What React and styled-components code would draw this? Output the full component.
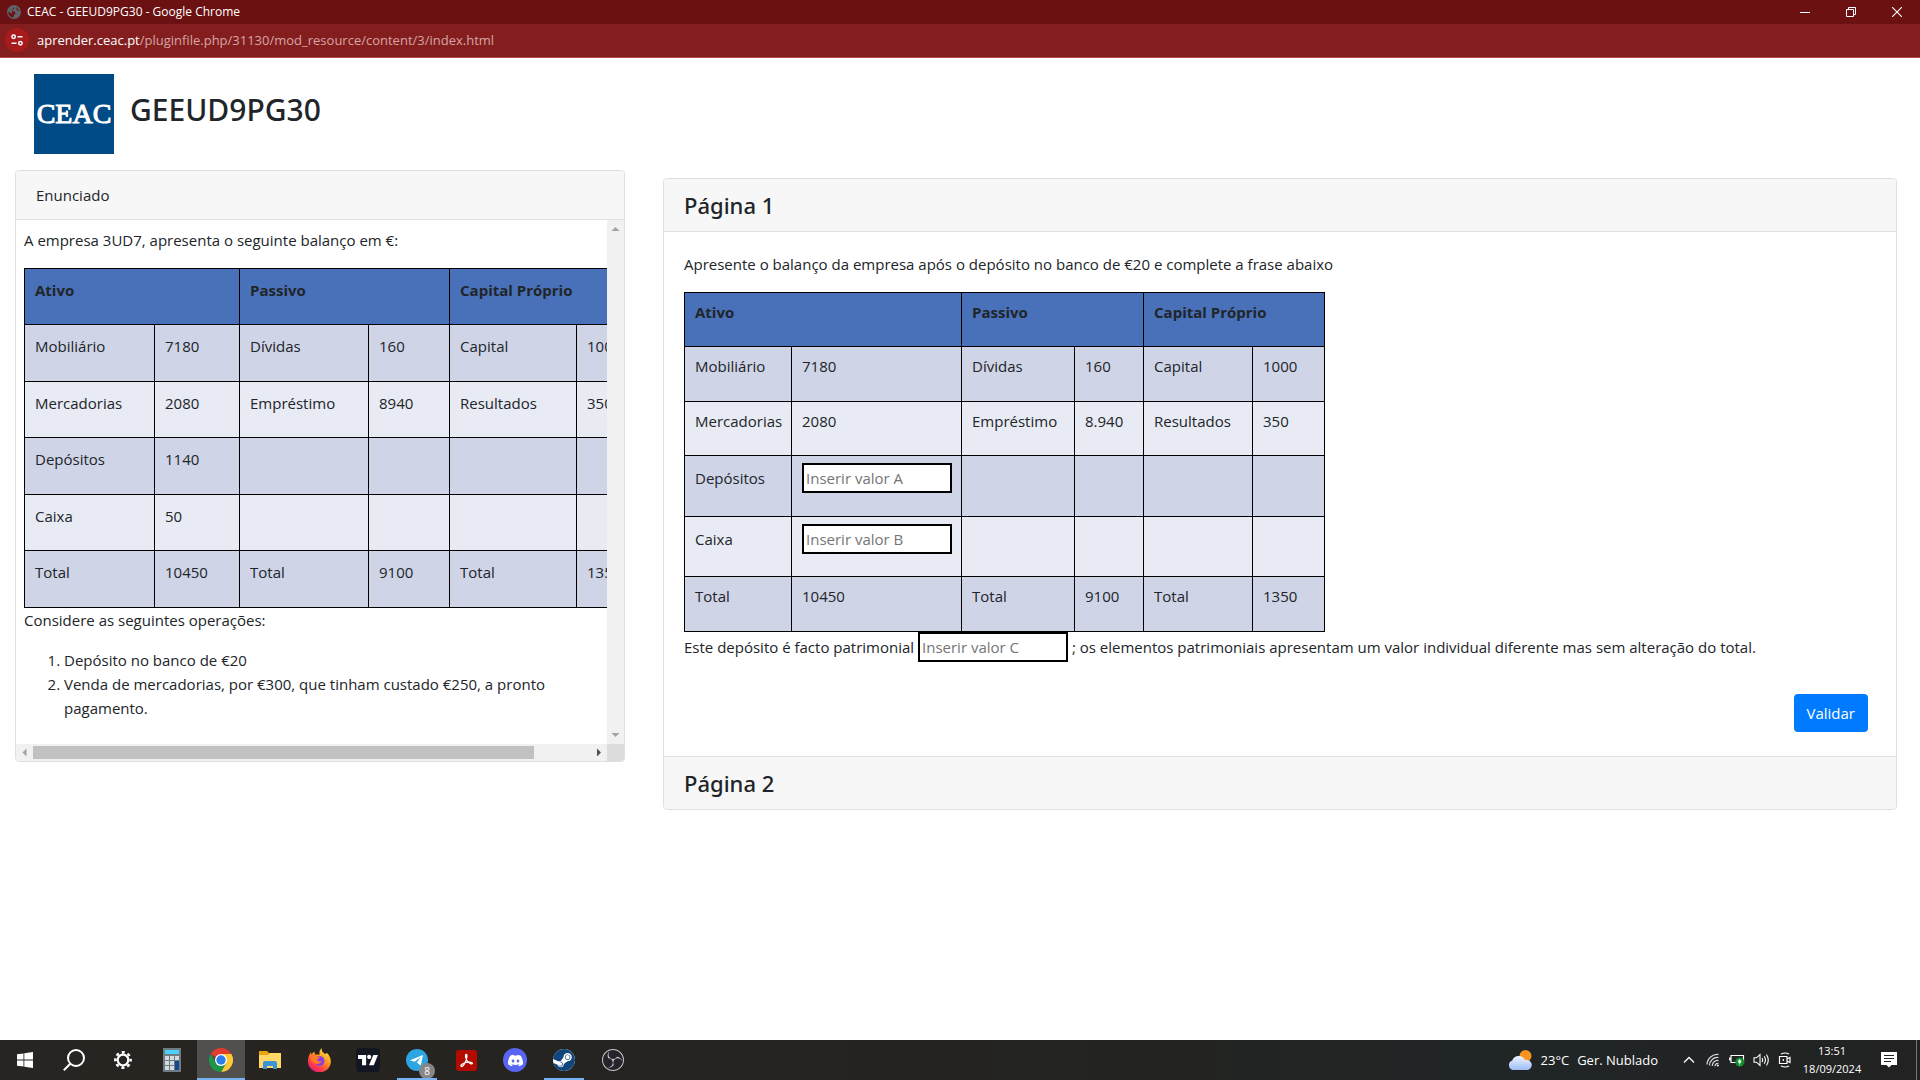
import styled, { createGlobalStyle } from "styled-components"
import { SiDiscord, SiSteam, SiObsstudio, SiTradingview } from "react-icons/si"

const statementTable = {
	cols: [130, 85, 129, 81, 127, 95],
	rows: [
		["Mobiliário", "7180", "Dívidas", "160", "Capital", "1000"],
		["Mercadorias", "2080", "Empréstimo", "8940", "Resultados", "350"],
		["Depósitos", "1140", "", "", "", ""],
		["Caixa", "50", "", "", "", ""],
		["Total", "10450", "Total", "9100", "Total", "1350"],
	],
}

const answerTable = {
	cols: [107, 170, 113, 69, 109, 72],
	rows: [
		["Mobiliário", "7180", "Dívidas", "160", "Capital", "1000"],
		["Mercadorias", "2080", "Empréstimo", "8.940", "Resultados", "350"],
		["Depósitos", { field: "A" }, "", "", "", ""],
		["Caixa", { field: "B" }, "", "", "", ""],
		["Total", "10450", "Total", "9100", "Total", "1350"],
	],
}

const Field = ({ name }) => (
	<Input type="text" aria-label={`Valor ${name}`} placeholder={`Inserir valor ${name}`} />
)

const BalanceTable = ({ cols, rows, roomy }) => (
	<Table $width={cols.reduce((a, b) => a + b, 0)} $roomy={roomy}>
		<colgroup>
			{cols.map((w, i) => <Col key={i} $w={w} />)}
		</colgroup>
		<thead>
			<tr>
				<th colSpan="2" scope="colgroup">Ativo</th>
				<th colSpan="2" scope="colgroup">Passivo</th>
				<th colSpan="2" scope="colgroup">Capital Próprio</th>
			</tr>
		</thead>
		<tbody>
			{rows.map((row) => (
				<tr key={row[0]}>
					{row.map((cell, i) => (
						<td key={i}>{cell.field ? <Field name={cell.field} /> : cell}</td>
					))}
				</tr>
			))}
		</tbody>
	</Table>
)

const App = () => {
	return (
		<Screen>
			<GlobalStyle />
			<TitleBar>
				<GlobeIcon />
				<WindowTitle>CEAC - GEEUD9PG30 - Google Chrome</WindowTitle>
				<WindowButton aria-label="Minimizar">
					<svg width="10" height="10"><path d="M0 5.500h10" stroke="#fff" /></svg>
				</WindowButton>
				<WindowButton aria-label="Restaurar">
					<svg width="10" height="10" fill="none" stroke="#fff"><path d="M.5 2.500h7v7h-7zM2.500 2.500v-2h7v7h-2" /></svg>
				</WindowButton>
				<WindowButton aria-label="Fechar">
					<svg width="10" height="10"><path d="M0 0l10 10M10 0L0 10" stroke="#fff" strokeWidth="1.100" /></svg>
				</WindowButton>
			</TitleBar>
			<AddressBar>
				<SiteInfo aria-label="Informações do site">
					<svg width="12" height="12" viewBox="0 0 12 12" fill="none" stroke="#fff" strokeWidth="1.500">
						<circle cx="2.600" cy="2.800" r="1.700" />
						<path d="M6.500 2.800H11.500M.5 9.200H5.500" />
						<circle cx="9.400" cy="9.200" r="1.700" />
					</svg>
				</SiteInfo>
				<Url><b>aprender.ceac.pt</b>/pluginfile.php/31130/mod_resource/content/3/index.html</Url>
			</AddressBar>

			<Page>
				<PageHeader>
					<Logo>CEAC</Logo>
					<PageTitle>GEEUD9PG30</PageTitle>
				</PageHeader>
				<Columns>
					<Statement>
						<Card>
							<CardHeader>Enunciado</CardHeader>
							<ScrollFrame>
								<ScrollContent>
									<p>A empresa 3UD7, apresenta o seguinte balanço em €:</p>
									<BalanceTable {...statementTable} roomy />
									<p>Considere as seguintes operações:</p>
									<ol>
										<li>Depósito no banco de €20</li>
										<li>Venda de mercadorias, por €300, que tinham custado €250, a pronto pagamento.</li>
									</ol>
								</ScrollContent>
								<VerticalBar>
									<svg width="17" height="17"><path d="M4.500 11h8l-4-4z" fill="#a3a3a3" /></svg>
									<svg width="17" height="17"><path d="M4.500 6h8l-4 4z" fill="#a3a3a3" /></svg>
								</VerticalBar>
								<HorizontalBar>
									<svg width="17" height="17"><path d="M10.500 4.500v8l-4-4z" fill="#a3a3a3" /></svg>
									<Track><Thumb /></Track>
									<svg width="17" height="17"><path d="M7 4.500v8l4-4z" fill="#505050" /></svg>
								</HorizontalBar>
								<ScrollCorner />
							</ScrollFrame>
						</Card>
					</Statement>
					<Exercise>
						<Card>
							<CardHeader><SectionTitle><button>Página 1</button></SectionTitle></CardHeader>
							<CardBody>
								<p>Apresente o balanço da empresa após o depósito no banco de €20 e complete a frase abaixo</p>
								<BalanceTable {...answerTable} />
								<p>
									Este depósito é facto patrimonial <Field name="C" /> ; os elementos patrimoniais apresentam um valor individual diferente mas sem alteração do total.
								</p>
								<Actions>
									<SubmitButton>Validar</SubmitButton>
								</Actions>
							</CardBody>
							<CardHeader $last><SectionTitle><button>Página 2</button></SectionTitle></CardHeader>
						</Card>
					</Exercise>
				</Columns>
			</Page>

			<Taskbar>
				<TaskButton aria-label="Iniciar"><WindowsIcon /></TaskButton>
				<TaskButton aria-label="Pesquisar"><SearchIcon /></TaskButton>
				<TaskButton aria-label="Definições"><GearIcon /></TaskButton>
				<TaskButton aria-label="Calculadora"><CalculatorIcon /></TaskButton>
				<TaskButton aria-label="Google Chrome" $active><ChromeIcon /></TaskButton>
				<TaskButton aria-label="Explorador de Ficheiros"><FolderIcon /></TaskButton>
				<TaskButton aria-label="Firefox"><FirefoxIcon /></TaskButton>
				<TaskButton aria-label="TradingView"><AppTile><SiTradingview size={20} /></AppTile></TaskButton>
				<TaskButton aria-label="Telegram" $open>
					<TelegramIcon />
					<Badge>8</Badge>
				</TaskButton>
				<TaskButton aria-label="Acrobat"><AcrobatIcon /></TaskButton>
				<TaskButton aria-label="Discord"><DiscordTile><SiDiscord size={15} /></DiscordTile></TaskButton>
				<TaskButton aria-label="Steam" $open><SteamTile><SiSteam size={22} /></SteamTile></TaskButton>
				<TaskButton aria-label="OBS Studio"><ObsTile><SiObsstudio size={22} /></ObsTile></TaskButton>

				<Tray>
					<Weather>
						<WeatherIcon />
						<span>23°C</span>
						<span>Ger. Nublado</span>
					</Weather>
					<TrayIcon>
						<svg width="12" height="8" fill="none" stroke="#fff" strokeWidth="1.300"><path d="M1 6.500l5-5 5 5" /></svg>
					</TrayIcon>
					<TrayIcon>
						<svg width="14" height="14" viewBox="0 0 14 14" fill="none" stroke="#ddd" strokeWidth="1.200">
							<path d="M1 11.500A10.500 10.500 0 0 1 12.500 1.500M3.500 12.500A8 8 0 0 1 12.500 4.500M6.200 13A5.500 5.500 0 0 1 12.500 7.500M9 13.300A3 3 0 0 1 12.500 10.300" />
							<circle cx="11.800" cy="12.500" r="1" fill="#fff" stroke="none" />
						</svg>
					</TrayIcon>
					<TrayIcon>
						<svg width="16" height="14" viewBox="0 0 16 14">
							<path d="M2 2.500h12.500v7H2zM.7 4.500v3" fill="none" stroke="#fff" strokeWidth="1.200" />
							<circle cx="10.700" cy="9" r="4.600" fill="#128a2e" />
							<path d="M10.700 6.200c2 1.800 1.600 3.800 0 4-1.600-.2-2-2.200 0-4zM10.700 9.500v3" fill="#e9ffe9" stroke="#e9ffe9" strokeWidth=".6" />
						</svg>
					</TrayIcon>
					<TrayIcon>
						<svg width="17" height="14" viewBox="0 0 17 14" fill="none" stroke="#fff" strokeWidth="1.100">
							<path d="M1 4.800h2.500l3.500-3.300v11L3.500 9.200H1zM9 5q1.300 2 0 4M11.200 3.200q2.500 3.800 0 7.600M13.400 1.500q3.800 5.500 0 11" />
						</svg>
					</TrayIcon>
					<TrayIcon>
						<svg width="14" height="16" viewBox="0 0 14 16" fill="none" stroke="#fff" strokeWidth="1.200">
							<path d="M1.500 4.500h7.500v7H1.500zM9 7l3-1.500v5L9 9M3 2q4-2 8 0M3 14q4 2 8 0" />
							<path d="M5.300 7v2" />
						</svg>
					</TrayIcon>
					<Clock>
						<span>13:51</span>
						<span>18/09/2024</span>
					</Clock>
					<Notifications aria-label="Notificações">
						<svg width="16" height="16" viewBox="0 0 16 16">
							<path d="M0 0h16v13h-5.500L8 15.600 5.500 13H0z" fill="#fff" />
							<path d="M3 3.500h10M3 6.500h10M3 9.500h7" stroke="#222" />
						</svg>
					</Notifications>
				</Tray>
			</Taskbar>
		</Screen>
	)
}

export default App

const GlobeIcon = () => (
	<svg width="14" height="14" viewBox="0 0 14 14">
		<circle cx="7" cy="7" r="7" fill="#5f6368" />
		<path d="M6.500 1.200c-1 1.300 1.500 1.500.3 2.800-1 .8-2.300.7-2 2 1.200.6 3 0 3.600 1.400.4 1.600-1.500 1.500-1.700 3-.1 1-.6 1.800-1.200 2.200C2.500 11.500 1.200 9.500 1.300 7c2 .2 3.200 1.300 3.300 2.700M9.200 2c-.5 1.500 1 1.800.6 3 .8 1 2.200.4 3 1.400" fill="#6b1112" />
	</svg>
)

const WindowsIcon = () => (
	<svg width="16" height="16" viewBox="0 0 16 16" fill="#fff">
		<path d="M0 2.300L6.500 1.400v6.100H0zM7.300 1.300L16 0v7.500H7.300zM0 8.400h6.500v6.100L0 13.700zM7.300 8.400H16V16l-8.700-1.300z" />
	</svg>
)

const SearchIcon = () => (
	<svg width="22" height="22" viewBox="0 0 22 22" fill="none" stroke="#fff" strokeWidth="2">
		<circle cx="13" cy="9" r="8" />
		<path d="M7.300 14.700L.8 21.200" />
	</svg>
)

const GearIcon = () => (
	<svg width="18" height="18" viewBox="0 0 18 18" fill="none" stroke="#fff">
		<circle cx="9" cy="9" r="5.300" strokeWidth="2.200" />
		<circle cx="9" cy="9" r="7.600" strokeWidth="2.600" strokeDasharray="3 2.969" strokeDashoffset="1.500" />
	</svg>
)

const CalculatorIcon = () => (
	<svg width="18" height="24" viewBox="0 0 18 24">
		<path d="M0 0h18v24H0z" fill="#6f7b83" />
		<path d="M2 2h14v4H2z" fill="#4cd2f7" />
		<path d="M2 8h4v4H2zM7 8h4v4H7zM12 8h4v4h-4zM2 13h4v4H2zM7 13h4v4H7zM2 18h4v4H2zM7 18h4v4H7z" fill="#d5dade" />
		<path d="M12 13h4v9h-4z" fill="#13488c" />
	</svg>
)

const ChromeIcon = () => (
	<svg width="24" height="24" viewBox="0 0 24 24">
		<path d="M12 12L1.600 6A12 12 0 0 1 22.400 6H12z" fill="#e33b2e" />
		<path d="M12 6h10.400A12 12 0 0 1 12 24l5.200-9z" fill="#fcc934" />
		<path d="M1.600 6A12 12 0 0 0 12 24l5.200-9-5.200 3-5.200-3z" fill="#1e9648" />
		<circle cx="12" cy="12" r="6" fill="#fff" />
		<circle cx="12" cy="12" r="4.700" fill="#2b7de9" />
	</svg>
)

const FolderIcon = () => (
	<svg width="22" height="18" viewBox="0 0 22 18">
		<path d="M0 0h8l2 2h12v15H0z" fill="#e8a60c" />
		<path d="M0 4h9l2-2h11v15H0z" fill="#ffd867" />
		<path d="M4 18v-6q0-2 2-2h10q2 0 2 2v6h-4v-3H8v3z" fill="#3a94d6" />
	</svg>
)

const FirefoxIcon = () => (
	<svg width="23" height="24" viewBox="0 0 23 24">
		<defs>
			<linearGradient id="fox" x1=".85" y1="0" x2=".2" y2="1">
				<stop offset="0" stopColor="#fff34f" />
				<stop offset=".4" stopColor="#ff9a1f" />
				<stop offset=".75" stopColor="#ff3b47" />
				<stop offset="1" stopColor="#e31587" />
			</linearGradient>
		</defs>
		<path d="M14 0c-1 3 1 4.500 3 6l2-1c3 3 4 6 3.800 9A11.400 10.600 0 0 1 0 13.500C0 9 1.500 6 3 4l.5 2.500C4.500 5 5.500 4 6.500 3.700L7 6.500c2 0 3-.2 4.500.5C11 4 12 1.500 14 0z" fill="url(#fox)" />
		<circle cx="11.500" cy="13" r="5" fill="#8a3fe0" />
		<path d="M3.500 8.500c2-2 4-1.500 6 .3h3c-1 1.700-3 1.800-3.500 2.800 0 1.500 2.500 2.500 5 1.200-1 3-5 4-8 2.200S3 11 3.500 8.500z" fill="#ff7a24" />
	</svg>
)

const TelegramIcon = () => (
	<svg width="22" height="22" viewBox="0 0 22 22">
		<circle cx="11" cy="11" r="11" fill="#2ca5e0" />
		<path d="M4 11.200L17 6l-2.200 10.500-4-3L15 8l-6.500 4.800z" fill="#fff" />
	</svg>
)

const AcrobatIcon = () => (
	<svg width="21" height="21" viewBox="0 0 21 21">
		<rect width="21" height="21" rx="3" fill="#b30b00" />
		<path d="M10.300 4.500c-1.300 0-.8 3.500.7 6 1.600 2.700 5 4.300 5.400 2.900.4-1.600-5.300-1.500-8-.4-2.600 1-4 2.600-3.200 3.300 1.300 1 3.600-2.500 4.700-5.500.8-2.400 1.700-6.300.4-6.300z" fill="none" stroke="#fff" strokeWidth="1.300" />
	</svg>
)

const WeatherIcon = () => (
	<svg width="25" height="20" viewBox="0 0 25 20">
		<defs>
			<linearGradient id="cloud" x1="0" y1="0" x2="0" y2="1">
				<stop offset="0" stopColor="#eef4ff" />
				<stop offset="1" stopColor="#9dbcf5" />
			</linearGradient>
		</defs>
		<circle cx="17.500" cy="6" r="6" fill="#f79421" />
		<path d="M5 20a5 5 0 0 1-.8-9.600A7 7 0 0 1 17 10a5 5 0 0 1 3 10z" fill="url(#cloud)" />
	</svg>
)

const GlobalStyle = createGlobalStyle`
	*, *::before, *::after {
		box-sizing: border-box;
	}
	body {
		margin: 0;
		background: #fff;
		color: #212529;
		font-family: "Open Sans", "Noto Sans", sans-serif;
		font-size: 15px;
		line-height: 24px;
	}
	button, input {
		font: inherit;
		color: inherit;
	}
	button {
		border: 0;
		padding: 0;
		background: none;
	}
	svg {
		display: block;
		flex: none;
	}
	p {
		margin: 0 0 16px;
	}
	ol {
		margin: 0 0 16px;
		padding-left: 40px;
	}
`

const Screen = styled.div`
	display: flex;
	flex-direction: column;
	min-height: 100vh;
`

const TitleBar = styled.div`
	display: flex;
	align-items: center;
	height: 24px;
	padding-left: 7px;
	background: #6b1112;
	color: #fff;
	font-size: 12px;
`

const WindowTitle = styled.span`
	flex: 1;
	margin-left: 6px;
`

const WindowButton = styled.button`
	display: flex;
	align-items: center;
	justify-content: center;
	width: 46px;
	height: 24px;
`

const AddressBar = styled.div`
	display: flex;
	align-items: center;
	gap: 8px;
	height: 34px;
	padding: 0 5px 2px;
	background: #841e1e;
	border-bottom: 1px solid #b3494c;
	font-size: 13px;
`

const SiteInfo = styled.button`
	display: flex;
	align-items: center;
	justify-content: center;
	width: 24px;
	height: 24px;
	border-radius: 50%;
	background: #a81a1c;
`

const Url = styled.span`
	color: #d6a5a5;
	b {
		color: #fff;
		font-weight: 400;
	}
`

const Page = styled.main`
	flex: 1;
	padding-top: 16px;
`

const PageHeader = styled.header`
	display: flex;
	align-items: center;
	gap: 16px;
	margin: 0 34px 16px;
`

const Logo = styled.div`
	display: flex;
	align-items: center;
	justify-content: center;
	width: 80px;
	height: 80px;
	background: #004b85;
	color: #fff;
	font-family: "Liberation Serif", serif;
	font-size: 28px;
	-webkit-text-stroke: 1px #fff;
`

const PageTitle = styled.h1`
	margin: 0 0 8px;
	font-family: "Noto Sans", "Open Sans", sans-serif;
	font-size: 30px;
	font-weight: 500;
	line-height: 38px;
`

const Columns = styled.div`
	display: grid;
	grid-template-columns: minmax(0, 1fr) minmax(0, 2fr);
	align-items: start;
`

const Statement = styled.section`
	padding: 0 15px;
`

const Exercise = styled.section`
	padding: 8px 23px 0;
`

const Card = styled.div`
	border: 1px solid #dfdfdf;
	border-radius: 4px;
	overflow: hidden;
`

const CardHeader = styled.div`
	padding: 12px 20px;
	background: #f7f7f7;
	border-bottom: ${(p) => (p.$last ? "0" : "1px solid #dfdfdf")};
	border-top: ${(p) => (p.$last ? "1px solid #dfdfdf" : "0")};
`

const SectionTitle = styled.h4`
	margin: 0;
	font-family: "Noto Sans", "Open Sans", sans-serif;
	font-size: 22px;
	font-weight: 500;
	line-height: 28px;
	button {
		display: block;
	}
`

const CardBody = styled.div`
	padding: 20px 20px 24px;
`

const ScrollFrame = styled.div`
	display: grid;
	grid-template-columns: minmax(0, 1fr) 17px;
	grid-template-rows: auto 17px;
`

const ScrollContent = styled.div`
	padding: 8px;
	overflow: hidden;
`

const VerticalBar = styled.div`
	display: flex;
	flex-direction: column;
	justify-content: space-between;
	background: #f1f1f1;
`

const HorizontalBar = styled.div`
	display: flex;
	background: #f1f1f1;
`

const Track = styled.div`
	flex: 1;
	padding: 2px 0;
`

const Thumb = styled.div`
	width: 90%;
	height: 13px;
	background: #c1c1c1;
`

const ScrollCorner = styled.div`
	background: #dcdcdc;
`

const Table = styled.table`
	width: ${(p) => p.$width}px;
	height: 340px;
	table-layout: fixed;
	border-collapse: collapse;

	th, td {
		padding: ${(p) => (p.$roomy ? "9px 10px 22px" : "7px 10px 22px")};
		border: 1px solid #000;
		text-align: left;
		vertical-align: baseline;
		white-space: nowrap;
	}
	th {
		background: #4871b9;
		font-weight: 700;
	}
	tbody tr {
		background: #e8ebf3;
	}
	tbody tr:nth-child(odd) {
		background: #cfd4e7;
	}
`

const Col = styled.col`
	width: ${(p) => p.$w}px;
`

const Input = styled.input`
	width: 150px;
	height: 30px;
	padding: 1px 2px;
	border: 2px solid #000;
	border-radius: 0;
	background: #fff;
	&::placeholder {
		color: #757575;
		opacity: 1;
	}
`

const Actions = styled.div`
	display: flex;
	justify-content: flex-end;
	padding: 16px 8px 0;
`

const SubmitButton = styled.button`
	height: 38px;
	padding: 0 13px;
	border-radius: 4px;
	background: #007bff;
	color: #fff;
`

const Taskbar = styled.footer`
	display: flex;
	gap: 1px;
	height: 40px;
	padding-left: 1px;
	background: linear-gradient(90deg, #282421, #24231f 50%, #202526 80%, #222);
	color: #fff;
`

const TaskButton = styled.button`
	position: relative;
	display: flex;
	align-items: center;
	justify-content: center;
	width: 48px;
	height: 40px;
	background: ${(p) => (p.$active ? "#51504e" : "none")};
	&::after {
		content: "";
		position: absolute;
		bottom: 0;
		width: ${(p) => (p.$active ? "48px" : "40px")};
		height: 2px;
		background: ${(p) => (p.$active || p.$open ? "#76b3f5" : "none")};
	}
`

const AppTile = styled.span`
	display: flex;
	align-items: center;
	justify-content: center;
	width: 24px;
	height: 24px;
	border-radius: 4px;
	background: #131722;
`

const DiscordTile = styled(AppTile)`
	border-radius: 50%;
	background: #5865f2;
`

const SteamTile = styled(AppTile)`
	width: 22px;
	height: 22px;
	border-radius: 50%;
	background: #fff;
	color: #12457c;
`

const ObsTile = styled(AppTile)`
	width: 22px;
	height: 22px;
	border-radius: 50%;
	background: #26242a;
	color: #c8c8c8;
`

const Badge = styled.span`
	position: absolute;
	right: 6px;
	bottom: 1px;
	width: 16px;
	height: 16px;
	border-radius: 50%;
	background: #878787;
	font-size: 10px;
	line-height: 16px;
	text-align: center;
`

const Tray = styled.div`
	display: flex;
	align-items: center;
	margin-left: auto;
	margin-right: 3px;
	border-right: 1px solid #777;
`

const Weather = styled.div`
	display: flex;
	align-items: center;
	gap: 8px;
	margin-right: 19px;
	font-size: 13px;
`

const TrayIcon = styled.span`
	display: flex;
	justify-content: center;
	width: 24px;
`

const Clock = styled.div`
	display: flex;
	flex-direction: column;
	align-items: center;
	width: 60px;
	margin-left: 5px;
	font-size: 11px;
	line-height: 18px;
`

const Notifications = styled.button`
	display: flex;
	align-items: center;
	justify-content: center;
	width: 54px;
	height: 40px;
`
